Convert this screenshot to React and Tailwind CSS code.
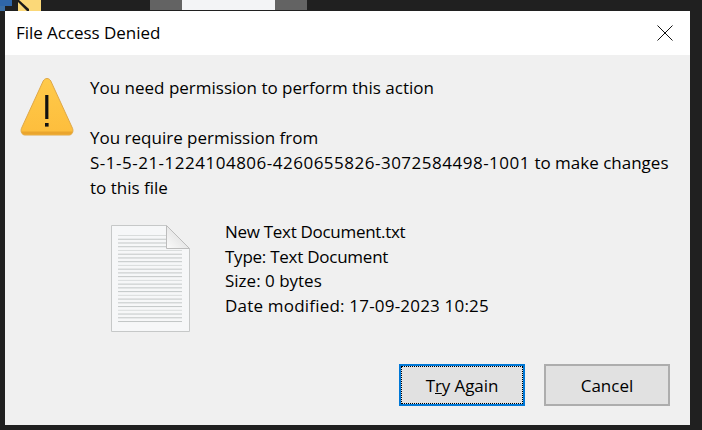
const docLines = Array.from({ length: 24 }, (_, i) => 10 + i * 3.74);

function WarningIcon() {
  return (
    <svg width="54" height="60" viewBox="0 0 54 60" className="shrink-0">
      <defs>
        <linearGradient id="w" x1="0" y1="0" x2="0" y2="1">
          <stop offset="0" stopColor="#ffca4a" />
          <stop offset="1" stopColor="#fdbd3c" />
        </linearGradient>
      </defs>
      <path d="M27 2.5 C25.2 2.5 24 3.6 23.2 5 L1.4 52.5 C0.4 55.2 1.6 59 5 59 L49 59 C52.4 59 53.6 55.2 52.6 52.5 L30.8 5 C30 3.6 28.8 2.5 27 2.5 Z" fill="url(#w)" stroke="#dfa848" strokeWidth="1" />
      <path d="M1.6 55.5 C2.2 57.8 3.4 58.6 5 58.6 L49 58.6 C50.6 58.6 51.8 57.8 52.4 55.5 Z" fill="#eaa52e" />
      <rect x="25.2" y="19" width="3.2" height="24" fill="#111" />
      <rect x="25" y="47" width="3.6" height="3.6" fill="#111" />
    </svg>
  );
}

function FileIcon() {
  return (
    <svg width="79" height="107" viewBox="0 0 79 107" className="shrink-0">
      <defs>
        <linearGradient id="fold" x1="0" y1="1" x2="1" y2="0">
          <stop offset="0" stopColor="#fbfbfb" />
          <stop offset="1" stopColor="#d4d4d4" />
        </linearGradient>
      </defs>
      <path d="M0.5 0.5 H55.5 L78.5 23.5 V106.5 H0.5 Z" fill="#f6f7f8" stroke="#c6c8c8" />
      {docLines.map((y, i) => (
        <rect key={i} x="7" y={y} width={y < 23 ? 48 : 64} height="1" fill={i % 4 === 0 ? "#d9dcdc" : "#c3c7c7"} />
      ))}
      <path d="M55.5 0.5 L78.5 23.5 H55.5 Z" fill="url(#fold)" stroke="#bcbcbc" />
    </svg>
  );
}

export default function App() {
  return (
    <div className="relative w-[702px] h-[430px] overflow-hidden bg-[#202020] font-['Open_Sans','Noto_Sans',sans-serif] text-black">
      <div className="flex h-[11px]">
        <div className="flex flex-col w-[12px]">
          <div className="h-[11px] bg-[#2f66a8]" />
          <div className="h-[11px] w-[5px] bg-[#3a6ea5]" />
        </div>
        <svg width="23" height="11" viewBox="0 0 23 11" className="ml-[6px] shrink-0">
          <rect width="23" height="11" fill="#fbd878" />
          <path d="M0 0 H1 L11 9 V11 H9 L0 2 Z" fill="#1a1a1a" />
        </svg>
        <div className="ml-[109px] w-[32px] h-[10px] bg-[#636363]" />
        <div className="w-[93px] h-[10px] bg-[#f3f4f6]" />
        <div className="w-[32px] h-[10px] bg-[#636363]" />
      </div>
      <div className="relative ml-[5px] w-[685px] h-[414px] flex flex-col bg-[#f0f0f0]">
        <div className="flex items-center justify-between h-[44px] bg-white pl-[11px] pr-[17px] shrink-0">
          <span className="text-[17px] tracking-[-0.04px]">File Access Denied</span>
          <svg width="16" height="16" viewBox="0 0 16 16" className="shrink-0">
            <path d="M0.5 0.5 L15.5 15.5 M15.5 0.5 L0.5 15.5" stroke="#111" strokeWidth="1" fill="none" />
          </svg>
        </div>
        <div className="flex pl-[15px] pt-[21px]">
          <WarningIcon />
          <div className="ml-[16px] -mt-[1px] w-[600px] text-[17px] leading-[25px]">
            <div>You need permission to perform this action</div>
            <div className="mt-[25px]">You require permission from</div>
            <div>
              <span className="tracking-[0.5px]">S-1-5-21-1224104806-4260655826-3072584498-1001</span> to make changes
            </div>
            <div>to this file</div>
          </div>
        </div>
        <div className="flex pl-[106px]">
          <div className="mt-[25px]">
            <FileIcon />
          </div>
          <div className="ml-[35px] mt-[20px] text-[17px] leading-[24.6px]">
            <div className="tracking-[-0.3px]">New Text Document.txt</div>
            <div className="tracking-[-0.25px]">Type: Text Document</div>
            <div>Size: 0 bytes</div>
            <div className="tracking-[0.2px]">Date modified: 17-09-2023 10:25</div>
          </div>
        </div>
        <div className="absolute right-[20px] bottom-[19px] flex gap-[19px]">
          <button className="w-[126px] h-[42px] border-2 border-[#0078d7] bg-[#e1e1e1] p-0 text-[17px]">
            <span className="flex items-center justify-center w-full h-full border border-dotted border-black pt-[1px] tracking-[-0.1px]">
              T<span className="underline">r</span>y Again
            </span>
          </button>
          <button className="w-[126px] h-[42px] border-2 border-[#adadad] bg-[#e1e1e1] pt-[1px] text-[17px]">Cancel</button>
        </div>
      </div>
    </div>
  );
}
